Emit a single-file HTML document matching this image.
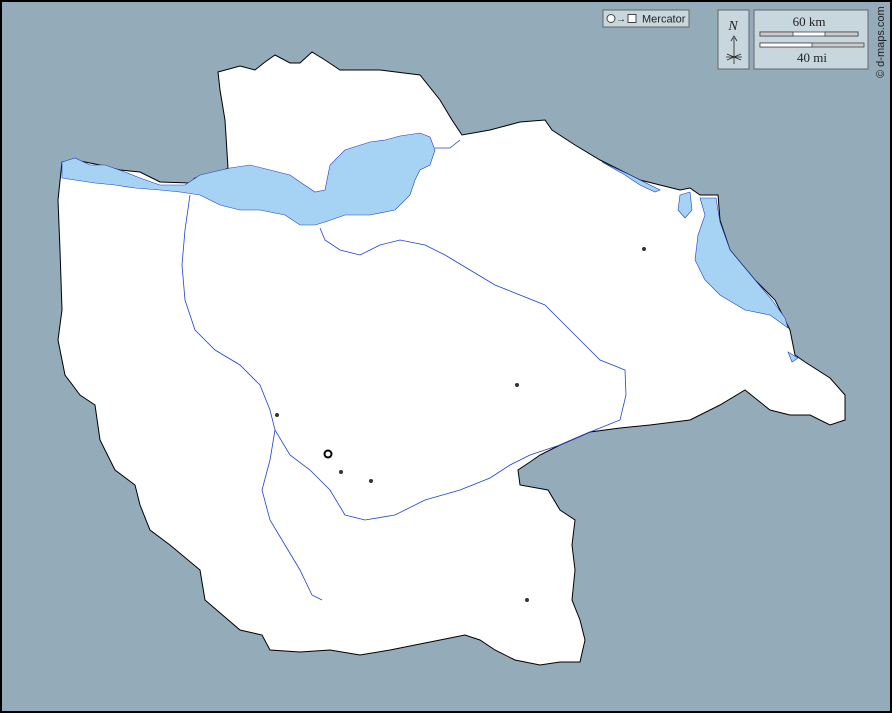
<!DOCTYPE html>
<html><head><meta charset="utf-8"><style>
html,body{margin:0;padding:0;background:#94abba;}
svg{display:block}
</style></head><body>
<svg width="892" height="713" viewBox="0 0 892 713" xmlns="http://www.w3.org/2000/svg">
<rect x="1" y="1" width="890" height="711" fill="#94abba" stroke="#000" stroke-width="2"/>
<path d="M218,72 L240,66 255,70 265,62 275,55 290,63 300,63 312,52 325,60 340,70 380,70 420,75 440,100 452,120 462,135 490,130 520,122 545,120 552,130 575,145 600,160 620,170 640,180 660,185 680,190 690,188 700,195 718,195 720,220 730,250 755,280 775,300 790,330 795,355 805,362 830,378 845,395 845,420 830,425 810,415 790,415 770,410 755,398 745,390 720,405 690,420 650,425 620,428 590,432 560,445 540,455 530,462 518,470 520,485 548,490 560,510 575,520 572,545 575,570 572,600 580,620 585,640 580,662 560,662 540,665 515,660 495,650 480,640 465,635 440,640 390,650 360,655 330,650 300,652 270,650 262,635 240,630 205,600 200,570 170,545 150,530 140,505 135,485 115,470 100,440 95,405 80,395 65,375 58,340 62,310 60,250 58,200 62,162 75,160 100,165 120,170 140,172 160,182 190,183 195,178 215,175 228,168 225,120 220,90 Z" fill="#fff" stroke="#000" stroke-width="1"/>
<path d="M62,162 L75,158 90,165 105,165 125,172 140,178 160,185 185,185 200,175 230,168 250,165 270,170 290,175 300,182 315,192 325,190 330,165 345,150 370,142 385,140 400,136 420,133 430,137 435,150 430,165 420,170 415,180 410,195 395,210 370,215 345,215 325,222 315,225 300,225 285,215 260,210 240,210 220,205 200,195 180,192 160,190 135,188 115,185 95,183 75,180 62,178 Z" fill="#a6d2f4" stroke="#2040c0" stroke-width="0.6"/>
<path d="M602,162 L625,175 640,185 655,192 660,190 630,175 Z" fill="#a6d2f4" stroke="#2040c0" stroke-width="0.6"/>
<path d="M680,195 L690,192 692,210 685,218 678,210 Z M700,198 L716,198 720,222 730,250 755,280 772,300 785,318 788,328 770,315 745,310 720,295 705,280 695,260 698,235 705,215 Z M788,352 L798,358 792,362 Z" fill="#a6d2f4" stroke="#2040c0" stroke-width="0.6"/>
<g fill="none" stroke="#2040d0" stroke-width="0.8">
<path d="M190,195 L185,230 182,265 185,300 195,330 215,350 240,365 260,385 270,410 275,430 290,455 310,470 330,490 345,515 365,520 395,515 425,500 460,490 490,478 510,465 530,455 560,445 590,432 620,420 626,395 625,370 600,360 580,340 560,320 545,305 520,295 495,285 470,270 445,255 425,245 400,240 380,245 360,255 340,250 325,240 320,228"/>
<path d="M275,430 L270,460 262,490 270,520 285,545 300,570 312,595 322,600"/>
<path d="M435,148 L450,148 460,140"/>
</g>
<g fill="#333"><circle cx="644" cy="249" r="2"/><circle cx="517" cy="385" r="2"/><circle cx="277" cy="415" r="2"/><circle cx="341" cy="472" r="2"/><circle cx="371" cy="481" r="2"/><circle cx="527" cy="600" r="2"/></g>
<circle cx="328" cy="454" r="3.5" fill="#fff" stroke="#000" stroke-width="2"/>
<rect x="603" y="10" width="86" height="17" fill="#c8d6de" stroke="#666"/>
<circle cx="611" cy="18.5" r="4" fill="#fff" stroke="#444"/>
<text x="616" y="22" font-family="Liberation Sans, sans-serif" font-size="10" fill="#222">→</text>
<rect x="628" y="14.5" width="8" height="8" fill="#fff" stroke="#444"/>
<text x="642" y="22.5" font-family="Liberation Sans, sans-serif" font-size="11" fill="#222">Mercator</text>
<rect x="718" y="10" width="31" height="59" fill="#c8d6de" stroke="#666"/>
<text x="733" y="30" text-anchor="middle" font-family="Liberation Serif, serif" font-style="italic" font-size="14" fill="#222">N</text>
<path d="M734,38 V64 M731,41 L734,36 737,41 M727,54 L741,60 M741,54 L727,60 M726,57 H742" stroke="#222" fill="none" stroke-width="0.8"/>
<rect x="754" y="10" width="114" height="59" fill="#c8d6de" stroke="#666"/>
<text x="809" y="26" text-anchor="middle" font-family="Liberation Serif, serif" font-size="13" fill="#222">60 km</text>
<rect x="760" y="32" width="98" height="4" fill="#fff" stroke="#444" stroke-width="0.8"/>
<rect x="760" y="32" width="33" height="4" fill="#ccc" stroke="#444" stroke-width="0.8"/>
<rect x="825" y="32" width="33" height="4" fill="#ccc" stroke="#444" stroke-width="0.8"/>
<rect x="760" y="43" width="104" height="4" fill="#ccc" stroke="#444" stroke-width="0.8"/>
<rect x="760" y="43" width="52" height="4" fill="#fff" stroke="#444" stroke-width="0.8"/>
<text x="812" y="62" text-anchor="middle" font-family="Liberation Serif, serif" font-size="13" fill="#222">40 mi</text>
<text transform="translate(884,78) rotate(-90)" font-family="Liberation Sans, sans-serif" font-size="11" fill="#222">© d-maps.com</text>
</svg>
</body></html>
